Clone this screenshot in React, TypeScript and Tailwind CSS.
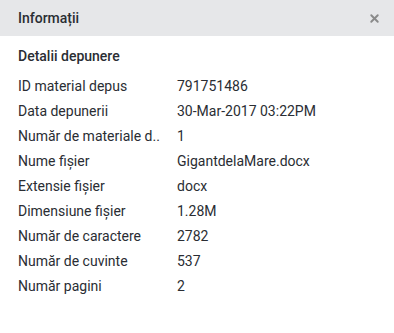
import { X } from "lucide-react"

const rows: [string, string][] = [
  ["ID material depus", "791751486"],
  ["Data depunerii", "30-Mar-2017 03:22PM"],
  ["Număr de materiale d..", "1"],
  ["Nume fișier", "GigantdelaMare.docx"],
  ["Extensie fișier", "docx"],
  ["Dimensiune fișier", "1.28M"],
  ["Număr de caractere", "2782"],
  ["Număr de cuvinte", "537"],
  ["Număr pagini", "2"],
]

export default function App() {
  return (
    <div className="w-[394px] h-[333px] bg-white text-[#2a2d33] font-['Roboto',sans-serif]">
      <div className="h-9 bg-[#e6e7e9] flex items-center justify-between pl-[18px] pr-[13px]">
        <span className="text-[14px] font-medium">Informații</span>
        <X size={13} strokeWidth={3.5} className="text-[#8a8a8a]" />
      </div>
      <div className="px-[18px] pt-[11px]">
        <div className="text-[14px] font-medium leading-[18px]">Detalii depunere</div>
        <div className="mt-[9px]">
          {rows.map(([label, value]) => (
            <div key={label} className="flex h-[25px] items-center text-[14px]">
              <span className="w-[159px] shrink-0">{label}</span>
              <span>{value}</span>
            </div>
          ))}
        </div>
      </div>
    </div>
  )
}
